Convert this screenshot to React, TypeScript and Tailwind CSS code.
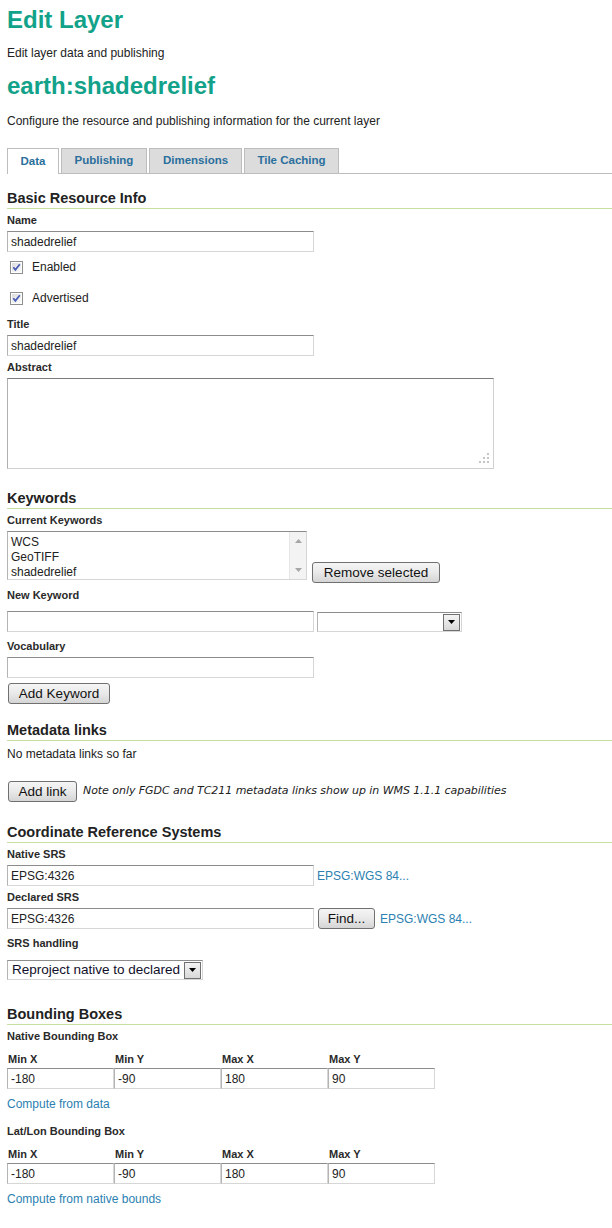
import React from "react";

const inputBorder =
  "border border-t-[#8c8c8c] border-l-[#b4b4b4] border-r-[#d6d6d6] border-b-[#d6d6d6] bg-white";

function Heading({ children, className = "" }: { children: React.ReactNode; className?: string }) {
  return (
    <h2
      className={`text-[14.5px] font-bold leading-[17px] pb-px border-b border-[#c7e0a0] text-[#222] ${className}`}
    >
      {children}
    </h2>
  );
}

function Label({ children, className = "" }: { children: React.ReactNode; className?: string }) {
  return <div className={`text-[11px] font-bold leading-[13px] text-[#2a2a2a] ${className}`}>{children}</div>;
}

function TextInput({ value = "", className = "w-[307px]" }: { value?: string; className?: string }) {
  return (
    <input
      readOnly
      value={value}
      className={`h-[21px] px-[3px] text-[12px] text-[#222] outline-none ${inputBorder} ${className}`}
    />
  );
}

function Button({ children, className = "" }: { children: React.ReactNode; className?: string }) {
  return (
    <button
      className={`flex shrink-0 items-center justify-center h-[21px] px-0 whitespace-nowrap border border-[#707070] rounded-[3px] bg-linear-to-b from-[#f5f5f5] via-[#e9e9e9] to-[#d5d5d5] text-[13.5px] leading-none text-[#111] ${className}`}
    >
      {children}
    </button>
  );
}

function Checkbox() {
  return (
    <svg width="13" height="13" viewBox="0 0 13 13">
      <defs>
        <linearGradient id="cb" x1="0" y1="0" x2="1" y2="1">
          <stop offset="0" stopColor="#dcdcdc" />
          <stop offset="1" stopColor="#fbfbfb" />
        </linearGradient>
      </defs>
      <rect x="0.5" y="0.5" width="12" height="12" fill="#fff" stroke="#8e8f8f" />
      <rect x="2" y="2" width="9" height="9" fill="url(#cb)" />
      <path d="M3.3 6.2 L5.4 8.8 L9.8 3.2" fill="none" stroke="#4a5cb6" strokeWidth="1.8" />
    </svg>
  );
}

function ArrowBox() {
  return (
    <div className="w-[17px] h-[17px] border border-[#707070] bg-linear-to-b from-[#f4f4f4] to-[#d8d8d8] flex items-center justify-center">
      <svg width="7" height="4" viewBox="0 0 7 4">
        <path d="M0 0 H7 L3.5 4 Z" fill="#000" />
      </svg>
    </div>
  );
}

function CheckRow({ label, className = "" }: { label: string; className?: string }) {
  return (
    <div className={`flex items-center h-[20px] pl-[3px] ${className}`}>
      <Checkbox />
      <span className="ml-[9px] text-[12px] text-[#222]">{label}</span>
    </div>
  );
}

function BBox({ label, link, className = "" }: { label: string; link: string; className?: string }) {
  const cols = [
    ["Min X", "-180"],
    ["Min Y", "-90"],
    ["Max X", "180"],
    ["Max Y", "90"],
  ];
  return (
    <div className={className}>
      <Label>{label}</Label>
      <div className="flex mt-[10px]">
        {cols.map(([l]) => (
          <Label key={l} className="w-[107px] pl-px">
            {l}
          </Label>
        ))}
      </div>
      <div className="flex mt-[2px]">
        {cols.map(([l, v]) => (
          <TextInput key={l} value={v} className="w-[107px]" />
        ))}
      </div>
      <div className="mt-[7px] text-[12px] leading-[16px] text-[#2b7fb1]">{link}</div>
    </div>
  );
}

export default function App() {
  const tabs = [
    { name: "Data", w: "w-[52px]", active: true },
    { name: "Publishing", w: "w-[86px]" },
    { name: "Dimensions", w: "w-[93px]" },
    { name: "Tile Caching", w: "w-[95px]" },
  ];

  return (
    <div className="w-[612px] min-h-[1228px] bg-white pl-[7px] pb-[22px] font-['Liberation_Sans',Arial,sans-serif] text-[#222]">
      <h1 className="pt-[6px] text-[24px] leading-[28px] font-bold text-[#12a28a]">Edit Layer</h1>
      <p className="mt-[11px] text-[12px] leading-[16px]">Edit layer data and publishing</p>
      <h1 className="mt-[11px] text-[24px] leading-[28px] font-bold text-[#12a28a]">earth:shadedrelief</h1>
      <p className="mt-[13px] text-[12px] leading-[16px]">
        Configure the resource and publishing information for the current layer
      </p>

      {/* tabs */}
      <div className="mt-[19px] flex gap-[2px] h-[26px] border-b border-[#bdbdbd]">
        {tabs.map((t) =>
          t.active ? (
            <div
              key={t.name}
              className={`${t.w} h-[26px] bg-white border border-b-0 border-[#bdbdbd] flex items-center justify-center text-[11.5px] font-bold text-[#2a6f9c]`}
            >
              {t.name}
            </div>
          ) : (
            <div
              key={t.name}
              className={`${t.w} h-[25px] bg-[#dcdcdc] border border-b-0 border-[#bdbdbd] flex items-center justify-center text-[11.5px] font-bold text-[#2a6f9c]`}
            >
              {t.name}
            </div>
          )
        )}
      </div>

      {/* basic resource info */}
      <Heading className="mt-[16px]">Basic Resource Info</Heading>
      <Label className="mt-[5px]">Name</Label>
      <TextInput value="shadedrelief" className="mt-[4px] w-[307px] block" />
      <CheckRow label="Enabled" className="mt-[5px]" />
      <CheckRow label="Advertised" className="mt-[11px]" />
      <Label className="mt-[10px]">Title</Label>
      <TextInput value="shadedrelief" className="mt-[4px] w-[307px] block" />
      <Label className="mt-[5px]">Abstract</Label>
      <div className="relative mt-[4px] w-[487px] h-[91px] border border-t-[#7c7c7c] border-l-[#b0b0b0] border-r-[#d0d0d0] border-b-[#d0d0d0] bg-white">
        <svg width="12" height="12" viewBox="0 0 12 12" className="absolute right-[3px] bottom-[3px]">
          <g fill="#c4c4c4">
            <rect x="9" y="0" width="2" height="2" />
            <rect x="5" y="4" width="2" height="2" />
            <rect x="9" y="4" width="2" height="2" />
            <rect x="1" y="8" width="2" height="2" />
            <rect x="5" y="8" width="2" height="2" />
            <rect x="9" y="8" width="2" height="2" />
          </g>
        </svg>
      </div>

      {/* keywords */}
      <Heading className="mt-[21px]">Keywords</Heading>
      <Label className="mt-[5px]">Current Keywords</Label>
      <div className="mt-[4px] flex items-start">
        <div className={`w-[300px] h-[49px] flex ${inputBorder}`}>
          <div className="flex-1 pt-[3px] pl-[3px] text-[12px] leading-[15px] text-[#222]">
            <div>WCS</div>
            <div>GeoTIFF</div>
            <div>shadedrelief</div>
          </div>
          <div className="w-[17px] h-full bg-[#f3f3f3] border-l border-[#e6e6e6] flex flex-col items-center justify-between py-[7px]">
            <svg width="7" height="4" viewBox="0 0 7 4">
              <path d="M0 4 H7 L3.5 0 Z" fill="#a6a6a6" />
            </svg>
            <svg width="7" height="4" viewBox="0 0 7 4">
              <path d="M0 0 H7 L3.5 4 Z" fill="#a6a6a6" />
            </svg>
          </div>
        </div>
        <Button className="ml-[5px] mt-[31px] w-[128px]">Remove selected</Button>
      </div>
      <Label className="mt-[6px]">New Keyword</Label>
      <div className="mt-[9px] flex items-start">
        <TextInput />
        <div className={`ml-[3px] mt-px w-[145px] h-[20px] flex items-center justify-end pr-px ${inputBorder}`}>
          <ArrowBox />
        </div>
      </div>
      <Label className="mt-[8px]">Vocabulary</Label>
      <TextInput className="mt-[4px] w-[307px] block" />
      <Button className="mt-[5px] ml-px w-[102px]">Add Keyword</Button>

      {/* metadata links */}
      <Heading className="mt-[18px]">Metadata links</Heading>
      <p className="mt-[5px] text-[12px] leading-[16px]">No metadata links so far</p>
      <div className="mt-[19px] flex items-center">
        <Button className="ml-px w-[69px]">Add link</Button>
        <span className="ml-[6px] font-['DejaVu_Sans',sans-serif] italic text-[11px] tracking-[-0.05px] text-[#222]">
          Note only FGDC and TC211 metadata links show up in WMS 1.1.1 capabilities
        </span>
      </div>

      {/* crs */}
      <Heading className="mt-[22px]">Coordinate Reference Systems</Heading>
      <Label className="mt-[5px]">Native SRS</Label>
      <div className="mt-[4px] flex items-center">
        <TextInput value="EPSG:4326" />
        <span className="ml-[3px] text-[12px] text-[#2b7fb1]">EPSG:WGS 84...</span>
      </div>
      <Label className="mt-[5px]">Declared SRS</Label>
      <div className="mt-[4px] flex items-center">
        <TextInput value="EPSG:4326" />
        <Button className="ml-[4px] w-[57px]">Find...</Button>
        <span className="ml-[5px] text-[12px] text-[#2b7fb1]">EPSG:WGS 84...</span>
      </div>
      <Label className="mt-[8px]">SRS handling</Label>
      <div className={`mt-[10px] w-[196px] h-[20px] flex items-center justify-between pl-[4px] pr-px ${inputBorder}`}>
        <span className="text-[13.5px] leading-none text-[#10102a]">Reproject native to declared</span>
        <ArrowBox />
      </div>

      {/* bounding boxes */}
      <Heading className="mt-[26px]">Bounding Boxes</Heading>
      <BBox label="Native Bounding Box" link="Compute from data" className="mt-[5px]" />
      <BBox label="Lat/Lon Bounding Box" link="Compute from native bounds" className="mt-[13px]" />
    </div>
  );
}
